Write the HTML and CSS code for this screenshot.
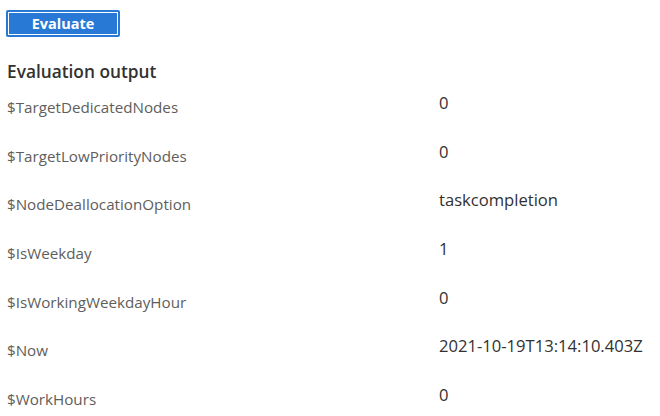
FILE: index.html
```html
<!DOCTYPE html>
<html>
<head>
<meta charset="utf-8">
<link rel="stylesheet" href="styles.css">
</head>
<body>
<div class="page">
  <button class="btn-primary">Evaluate</button>
  <h2 class="section-title">Evaluation output</h2>
  <div class="output">
    <div class="row"><div class="name">$TargetDedicatedNodes</div><div class="value">0</div></div>
    <div class="row"><div class="name">$TargetLowPriorityNodes</div><div class="value">0</div></div>
    <div class="row"><div class="name">$NodeDeallocationOption</div><div class="value">taskcompletion</div></div>
    <div class="row"><div class="name">$IsWeekday</div><div class="value">1</div></div>
    <div class="row"><div class="name">$IsWorkingWeekdayHour</div><div class="value">0</div></div>
    <div class="row"><div class="name">$Now</div><div class="value">2021-10-19T13:14:10.403Z</div></div>
    <div class="row"><div class="name">$WorkHours</div><div class="value">0</div></div>
  </div>
</div>
</body>
</html>
```

FILE: styles.css
```css
html, body {
  margin: 0;
  padding: 0;
  background: #ffffff;
}
.page {
  font-family: "Open Sans", "Noto Sans", sans-serif;
  padding: 10px 0 0 7px;
}
.btn-primary {
  display: block;
  box-sizing: border-box;
  margin-left: -1px;
  width: 114px;
  height: 27px;
  padding: 0;
  background: #2878d6;
  border: 2px solid #2878d6;
  outline: 1px solid #ffffff;
  outline-offset: -3px;
  border-radius: 2px;
  color: #ffffff;
  font-family: "Open Sans", sans-serif;
  font-weight: 700;
  font-size: 14.5px;
  line-height: 21px;
}
.section-title {
  margin: 23px 0 0 0;
  font-size: 17.3px;
  font-weight: 600;
  line-height: 24px;
  color: #323130;
}
.output {
  margin-top: 5px;
}
.row {
  display: grid;
  grid-template-columns: 432px 1fr;
  height: 48.67px;
  align-items: start;
}
.name {
  font-size: 15.2px;
  line-height: 22px;
  padding-top: 7px;
  color: #605e5c;
}
.value {
  font-size: 16.6px;
  line-height: 24px;
  padding-top: 2px;
  color: #323130;
}
```
